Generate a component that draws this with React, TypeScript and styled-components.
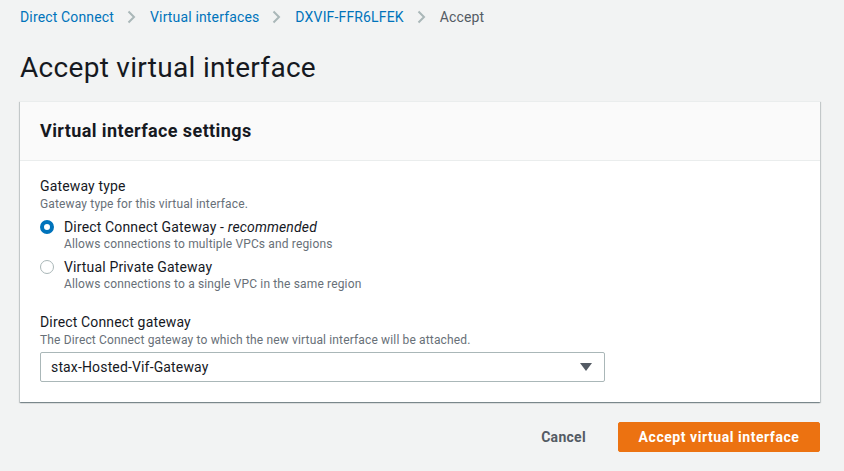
import React, { useState } from 'react'
import styled, { createGlobalStyle } from 'styled-components'

const GlobalStyle = createGlobalStyle`
  html, body {
    margin: 0;
    padding: 0;
    background: #f2f3f3;
    font-family: Roboto, "Liberation Sans", Arial, sans-serif;
    color: #16191f;
    letter-spacing: 0.15px;
  }
`

const Page = styled.main`
  padding: 8px 24px 0 20px;
  width: 800px;
`

const Breadcrumbs = styled.nav`
  display: flex;
  align-items: center;
  height: 18px;
  font-size: 14px;
`

const Crumb = styled.a<{ $current?: boolean }>`
  color: ${p => (p.$current ? '#545b64' : '#0073bb')};
  text-decoration: none;
`

const Chevron = styled.span`
  display: inline-flex;
  margin: 0 14px 0 13px;
  color: #aab7b8;
`

const Title = styled.h1`
  font-size: 28px;
  font-weight: 400;
  letter-spacing: 0.3px;
  margin: 26px 0 17px;
  line-height: 32px;
`

const Card = styled.section`
  background: #fff;
  box-shadow: 0 1px 1px 0 rgba(0, 28, 36, 0.3), 1px 1px 1px 0 rgba(0, 28, 36, 0.15), -1px 1px 1px 0 rgba(0, 28, 36, 0.15);
  border-top: 1px solid #eaeded;
`

const CardHeader = styled.header`
  background: #fafafa;
  border-bottom: 1px solid #eaeded;
  padding: 18px 20px;
  height: 22px;
`

const CardTitle = styled.h2`
  margin: 0;
  font-size: 18px;
  font-weight: 700;
  letter-spacing: 0.4px;
  line-height: 22px;
`

const CardBody = styled.div`
  padding: 15px 20px 20px;
`

const Field = styled.div`
  & + & {
    margin-top: 20px;
  }
`

const Label = styled.div`
  font-size: 14px;
  line-height: 20px;
`

const Description = styled.div`
  font-size: 12px;
  line-height: 16px;
  color: #687078;
`

const RadioList = styled.div`
  margin-top: 6px;
  display: flex;
  flex-direction: column;
  gap: 6px;
`

const RadioRow = styled.label`
  display: grid;
  grid-template-columns: 24px 1fr;
  cursor: pointer;
`

const RadioDot = styled.span<{ $checked: boolean }>`
  box-sizing: border-box;
  width: 14px;
  height: 14px;
  margin-top: 2px;
  border-radius: 50%;
  border: ${p => (p.$checked ? '4px solid #0073bb' : '1px solid #aab7b8')};
  background: #fff;
`

const RadioText = styled.div`
  font-size: 14px;
  line-height: 18px;
`

const RadioHint = styled.div`
  font-size: 12px;
  line-height: 16px;
  color: #687078;
`

const Select = styled.div`
  margin-top: 4px;
  width: 565px;
  height: 30px;
  box-sizing: border-box;
  border: 1px solid #aab7b8;
  border-radius: 2px;
  display: flex;
  align-items: center;
  justify-content: space-between;
  padding: 0 12px 0 10px;
  font-size: 14px;
`

const Footer = styled.div`
  display: flex;
  justify-content: flex-end;
  align-items: center;
  gap: 32px;
  margin-top: 20px;
`

const LinkButton = styled.button`
  background: none;
  border: none;
  font: inherit;
  font-size: 14px;
  font-weight: 700;
  letter-spacing: 0.3px;
  color: #545b64;
  padding: 0;
`

const PrimaryButton = styled.button`
  background: #ec7211;
  border: 1px solid #ec7211;
  border-radius: 2px;
  color: #fff;
  font: inherit;
  font-size: 14px;
  font-weight: 700;
  letter-spacing: 0.55px;
  height: 30px;
  width: 202px;
`

const ChevronIcon = () => (
  <svg width="9" height="14" viewBox="0 0 9 14">
    <path d="M1.5 1.5 L7 7 L1.5 12.5" fill="none" stroke="currentColor" strokeWidth="2" />
  </svg>
)

const CaretIcon = () => (
  <svg width="12" height="8" viewBox="0 0 12 8">
    <path d="M0 0 H12 L6 8 Z" fill="#545b64" />
  </svg>
)

const options = [
  { id: 'dxgw', title: 'Direct Connect Gateway', tag: 'recommended', hint: 'Allows connections to multiple VPCs and regions' },
  { id: 'vgw', title: 'Virtual Private Gateway', tag: '', hint: 'Allows connections to a single VPC in the same region' },
]

export default function App() {
  const [type, setType] = useState('dxgw')
  const crumbs = ['Direct Connect', 'Virtual interfaces', 'DXVIF-FFR6LFEK']

  return (
    <>
      <GlobalStyle />
      <Page>
        <Breadcrumbs>
          {crumbs.map(c => (
            <React.Fragment key={c}>
              <Crumb href="#">{c}</Crumb>
              <Chevron><ChevronIcon /></Chevron>
            </React.Fragment>
          ))}
          <Crumb $current>Accept</Crumb>
        </Breadcrumbs>

        <Title>Accept virtual interface</Title>

        <Card>
          <CardHeader>
            <CardTitle>Virtual interface settings</CardTitle>
          </CardHeader>
          <CardBody>
            <Field>
              <Label>Gateway type</Label>
              <Description>Gateway type for this virtual interface.</Description>
              <RadioList>
                {options.map(o => (
                  <RadioRow key={o.id} onClick={() => setType(o.id)}>
                    <RadioDot $checked={type === o.id} />
                    <div>
                      <RadioText>
                        {o.title}
                        {o.tag && <> - <i>{o.tag}</i></>}
                      </RadioText>
                      <RadioHint>{o.hint}</RadioHint>
                    </div>
                  </RadioRow>
                ))}
              </RadioList>
            </Field>
            <Field>
              <Label>Direct Connect gateway</Label>
              <Description>The Direct Connect gateway to which the new virtual interface will be attached.</Description>
              <Select>
                <span>stax-Hosted-Vif-Gateway</span>
                <CaretIcon />
              </Select>
            </Field>
          </CardBody>
        </Card>

        <Footer>
          <LinkButton>Cancel</LinkButton>
          <PrimaryButton>Accept virtual interface</PrimaryButton>
        </Footer>
      </Page>
    </>
  )
}
